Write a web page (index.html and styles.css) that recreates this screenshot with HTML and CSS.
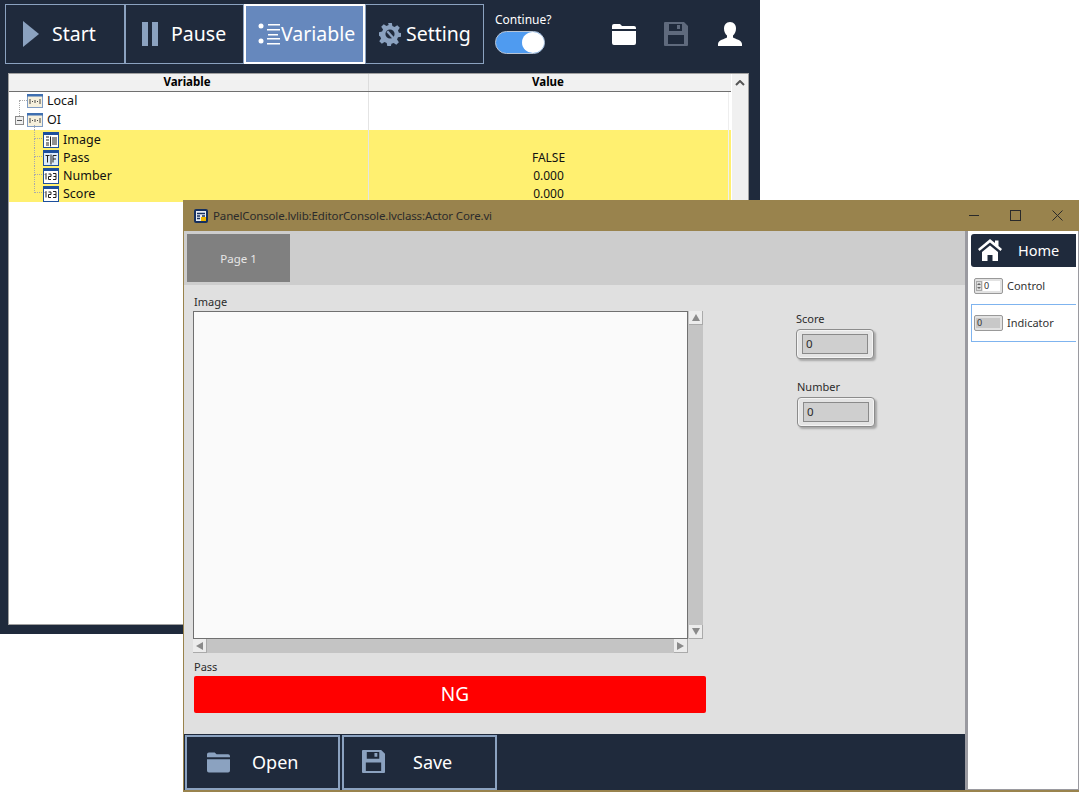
FILE: index.html
```html
<!DOCTYPE html>
<html lang="en">
<head>
    <meta charset="UTF-8">
    <title>PanelConsole</title>
    <link rel="stylesheet" href="styles.css">
</head>
<body>
    <svg class="defs" width="0" height="0">
        <symbol id="ic-cluster" viewBox="0 0 16 14">
            <rect x="0.5" y="0.5" width="15" height="13" fill="#f6f0dc" stroke="#7f9cc4"/>
            <rect x="0" y="0" width="16" height="2.5" fill="#3f6fb0"/>
            <path d="M3 5v5M13 5v5M5 7.5h1M10 7.5h1M8 6v3" stroke="#444" fill="none"/>
        </symbol>
        <symbol id="ic-image" viewBox="0 0 16 16">
            <rect x="0.5" y="0.5" width="15" height="15" fill="#fff" stroke="#1c4f9c"/>
            <rect x="0" y="0" width="16" height="3" fill="#1c4f9c"/>
            <path d="M3 5h3M3 8h3M3 11h3M3 13h3M7.500 4.500v10M9 6h5M9 8h5M9 10h5M9 12h5" stroke="#222" fill="none"/>
        </symbol>
        <symbol id="ic-bool" viewBox="0 0 16 16">
            <rect x="0.500" y="0.500" width="15" height="15" fill="#dcebfa" stroke="#1c4f9c"/>
            <rect x="0" y="0" width="16" height="3" fill="#1c4f9c"/>
            <path d="M2.500 5.500h4M4.500 5.500v7M8 4.500v10M10 5.500v7M10 5.500h3.500M10 9h3" stroke="#222" fill="none"/>
        </symbol>
        <symbol id="ic-num" viewBox="0 0 16 16">
            <rect x="0.500" y="0.500" width="15" height="15" fill="#fff" stroke="#1c4f9c"/>
            <rect x="0" y="0" width="16" height="3" fill="#1c4f9c"/>
            <path d="M2 6.500l1-1v6M5.500 6h2.500v2.500h-2.500v3h2.500M10 5.500h3v6h-3M10.500 8.500h2.500" stroke="#222" fill="none"/>
        </symbol>
        <symbol id="ic-folder" viewBox="0 0 24 22">
            <path d="M0 3a2 2 0 0 1 2-2h6l2 2h12a2 2 0 0 1 2 2v1H0zM0 8h24v12a2 2 0 0 1-2 2H2a2 2 0 0 1-2-2z"/>
        </symbol>
        <symbol id="ic-save" viewBox="0 0 24 24">
            <path fill-rule="evenodd" d="M0 1a1 1 0 0 1 1-1h19l4 4v19a1 1 0 0 1-1 1H1a1 1 0 0 1-1-1zM5 2v7h13V2zM13 3h3v4h-3zM4 13v9h16v-9z"/>
        </symbol>
    </svg>

    <section class="win win-back">
        <header class="toolbar">
            <div class="tabs">
                <button class="tool tool-start">
                    <svg class="tool-ic" width="16" height="26" viewBox="0 0 16 26"><path d="M0 0l16 13L0 26z" fill="#8ba2c0"/></svg>
                    <span>Start</span>
                </button>
                <button class="tool tool-pause">
                    <svg class="tool-ic" width="16" height="24" viewBox="0 0 16 24"><path d="M0 0h6v24H0zM10 0h6v24h-6z" fill="#8ba2c0"/></svg>
                    <span>Pause</span>
                </button>
                <button class="tool tool-var active">
                    <svg class="tool-ic" width="23" height="22" viewBox="0 0 23 22"><g fill="#fff"><circle cx="3" cy="3" r="2.500"/><circle cx="3" cy="18" r="2.500"/><rect x="10" y="1" width="12" height="1.500"/><rect x="9" y="6" width="13" height="1.500"/><rect x="10" y="11" width="10" height="1.500"/><rect x="9" y="15" width="13" height="1.500"/><rect x="9" y="20" width="13" height="1.500"/></g></svg>
                    <span>Variable</span>
                </button>
                <button class="tool tool-set">
                    <svg class="tool-ic" width="22" height="24" viewBox="0 0 24 24"><path fill="#8ba2c0" fill-rule="evenodd" d="M10 0h4l.6 3.400 2.400 1 2.900-2 2.800 2.800-2 2.900 1 2.400 2.300.5v4l-3.300.6-1 2.400 2 2.900-2.800 2.800-2.900-2-2.400 1-.6 2.300h-4l-.6-3.300-2.400-1-2.900 2-2.800-2.800 2-2.900-1-2.400L0 14v-4l3.400-.6 1-2.400-2-2.900 2.800-2.800 2.900 2 2.400-1zM12 7a5 5 0 1 0 0 10 5 5 0 0 0 0-10z"/><path d="M9 9l8 9" stroke="#8ba2c0" stroke-width="2.500"/></svg>
                    <span>Setting</span>
                </button>
            </div>
            <div class="continue">
                <div class="continue-label">Continue?</div>
                <div class="switch"><div class="knob"></div></div>
            </div>
            <div class="toolbar-icons">
                <svg class="ic-white" width="24" height="22"><use href="#ic-folder"/></svg>
                <svg class="ic-dim" width="24" height="24"><use href="#ic-save"/></svg>
                <svg class="ic-white ic-user" width="24" height="24" viewBox="0 0 24 24"><path d="M12 0c4 0 6 3 6 6.500 0 3-1.200 5.500-3 7v2c2 1.500 9 2.500 9 6.500v2H0v-2c0-4 7-5 9-6.500v-2c-1.800-1.500-3-4-3-7C6 3 8 0 12 0z"/></svg>
            </div>
        </header>

        <div class="tree-panel">
            <div class="tree-main">
                <div class="tree-head">
                    <div class="col-var">Variable</div>
                    <div class="col-val">Value</div>
                </div>
                <div class="tree-row row-top">
                    <div class="col-var">
                        <span class="dots"></span>
                        <svg class="tree-ic" width="16" height="14"><use href="#ic-cluster"/></svg>Local
                    </div>
                    <div class="col-val"></div>
                </div>
                <div class="tree-row row-top">
                    <div class="col-var">
                        <span class="expander"></span>
                        <span class="dash-oi"></span>
                        <svg class="tree-ic" width="16" height="14"><use href="#ic-cluster"/></svg>OI
                    </div>
                    <div class="col-val"></div>
                </div>
                <div class="tree-rows">
                    <div class="tree-row child hl">
                        <div class="col-var"><span class="dash"></span><svg class="tree-ic" width="16" height="16"><use href="#ic-image"/></svg>Image</div>
                        <div class="col-val"></div>
                    </div>
                    <div class="tree-row child hl">
                        <div class="col-var"><span class="dash"></span><svg class="tree-ic" width="16" height="16"><use href="#ic-bool"/></svg>Pass</div>
                        <div class="col-val">FALSE</div>
                    </div>
                    <div class="tree-row child hl">
                        <div class="col-var"><span class="dash"></span><svg class="tree-ic" width="16" height="16"><use href="#ic-num"/></svg>Number</div>
                        <div class="col-val">0.000</div>
                    </div>
                    <div class="tree-row child hl">
                        <div class="col-var"><span class="dash"></span><svg class="tree-ic" width="16" height="16"><use href="#ic-num"/></svg>Score</div>
                        <div class="col-val">0.000</div>
                    </div>
                </div>
            </div>
            <div class="tree-scroll">
                <svg width="10" height="6" viewBox="0 0 10 6"><path d="M1 5l4-4 4 4" fill="none" stroke="#555" stroke-width="2"/></svg>
            </div>
        </div>
    </section>

    <section class="win win-front">
        <header class="titlebar">
            <svg class="app-ic" width="14" height="14" viewBox="0 0 14 14"><rect width="14" height="14" rx="2" fill="#16305f"/><path d="M2 2h10v10H2z" fill="#e8eef6"/><path d="M3 4.500h8M3 7h3M8 7h3M3 9.500h3" stroke="#16305f" stroke-width="1.300"/><rect x="7" y="8" width="5" height="4" fill="#f0b800"/></svg>
            <span class="title-text">PanelConsole.lvlib:EditorConsole.lvclass:Actor Core.vi</span>
            <div class="win-btns">
                <span class="win-min"></span>
                <span class="win-max"></span>
                <svg width="11" height="11" viewBox="0 0 11 11"><path d="M.5.500l10 10M10.500.500l-10 10" stroke="#2a2a2a" fill="none"/></svg>
            </div>
        </header>

        <div class="front-body">
            <div class="main-col">
                <div class="page-strip"><div class="page-tab">Page 1</div></div>
                <div class="content">
                    <div class="left-col">
                        <label class="ctl-label">Image</label>
                        <div class="image-wrap">
                            <div class="image-box"></div>
                            <div class="vscroll">
                                <span class="arrow-btn"><i class="tri tri-up"></i></span>
                                <span class="arrow-btn"><i class="tri tri-down"></i></span>
                            </div>
                            <div class="hscroll">
                                <span class="arrow-btn"><i class="tri tri-left"></i></span>
                                <span class="arrow-btn"><i class="tri tri-right"></i></span>
                            </div>
                        </div>
                        <label class="ctl-label pass-label">Pass</label>
                        <div class="ng-bar">NG</div>
                    </div>
                    <div class="right-col">
                        <label class="ctl-label">Score</label>
                        <div class="numeric"><div class="numeric-in">0</div></div>
                        <label class="ctl-label number-label">Number</label>
                        <div class="numeric num-2"><div class="numeric-in">0</div></div>
                    </div>
                </div>
                <footer class="front-foot">
                    <button class="foot-btn">
                        <svg class="foot-ic" width="23" height="22"><use href="#ic-folder"/></svg>
                        <span class="foot-open">Open</span>
                    </button>
                    <button class="foot-btn foot-save-btn">
                        <svg class="foot-ic" width="23" height="23"><use href="#ic-save"/></svg>
                        <span class="foot-save">Save</span>
                    </button>
                </footer>
            </div>
            <aside class="palette">
                <div class="home-btn">
                    <svg width="24" height="22" viewBox="0 0 24 22"><path fill="#fff" d="M12 0l5 4V1.500h3.500V7l3.500 3-1.500 2L12 3.500 1.500 12 0 10zM4 13l8-6.500 8 6.500v9h-5.500v-6h-5v6H4z"/></svg>
                    <span>Home</span>
                </div>
                <div class="pal-item pal-control">
                    <div class="mini mini-ctl">
                        <span class="mini-spin"><i class="spin-up"></i><i class="spin-down"></i></span>
                        <span class="mini-val">0</span>
                    </div>
                    <span class="pal-text">Control</span>
                </div>
                <div class="pal-item pal-ind">
                    <div class="mini mini-ind"><span class="mini-val">0</span></div>
                    <span class="pal-text">Indicator</span>
                </div>
            </aside>
        </div>
    </section>
</body>
</html>
```

FILE: styles.css
```css
html, body {
    margin: 0;
    padding: 0;
    background-color: #fff;
    overflow: hidden;
}
body {
    width: 1079px;
    height: 792px;
    position: relative;
    font-family: "Noto Sans", "Open Sans", sans-serif;
}
.defs {
    position: absolute;
}
.win {
    position: absolute;
    box-sizing: border-box;
}
.win-back {
    left: 0;
    top: 0;
    width: 760px;
    height: 634px;
    background-color: #1f2a3c;
}
.toolbar {
    display: flex;
    height: 73px;
    padding: 4px 0 0 5px;
    box-sizing: border-box;
}
.tabs {
    display: flex;
    height: 60px;
}
.tool {
    display: flex;
    align-items: center;
    height: 60px;
    box-sizing: border-box;
    background-color: #1f2a3c;
    border: 1px solid #8ba2c0;
    margin: 0;
    padding: 0 0 2px 0;
    color: #fff;
    font-family: inherit;
    font-size: 19.5px;
}
.tool-ic {
    margin-top: 2px;
}
.tool-start {
    width: 120px;
    padding-left: 17px;
    gap: 13px;
}
.tool-pause {
    width: 119px;
    padding-left: 16px;
    gap: 13px;
}
.tool-var {
    width: 121px;
    padding-left: 12px;
    gap: 0;
}
.tool-set {
    width: 119px;
    padding-left: 13px;
    gap: 5px;
}
.tool.active {
    background-color: #6688bd;
    border: 2px solid #fff;
}
.continue {
    width: 110px;
    padding: 8px 0 0 11px;
    box-sizing: border-box;
}
.continue-label {
    color: #fff;
    font-size: 12px;
    line-height: 16px;
}
.switch {
    width: 50px;
    height: 23px;
    margin-top: 3px;
    box-sizing: border-box;
    border: 1px solid #b8c4d4;
    border-radius: 12px;
    background-color: #4f9bf0;
    display: flex;
    justify-content: flex-end;
}
.knob {
    width: 22px;
    height: 21px;
    border-radius: 50%;
    background-color: #fff;
}
.toolbar-icons {
    display: flex;
    align-items: center;
    gap: 28px;
    height: 60px;
    margin-left: 18px;
}
.ic-white {
    fill: #fff;
}
.ic-dim {
    fill: #5f6a7d;
}
.ic-user {
    margin-left: 2px;
}
.tree-panel {
    display: flex;
    width: 741px;
    height: 552px;
    margin-left: 8px;
    box-sizing: border-box;
    border: 1px solid #a0a0a0;
    background-color: #fff;
}
.tree-main {
    width: 722px;
}
.tree-scroll {
    flex: 1;
    background-color: #f0f0f0;
    display: flex;
    justify-content: center;
    padding-top: 6px;
    margin-left: 1px;
    height: 100%;
    box-sizing: border-box;
}
.tree-head {
    display: flex;
    height: 18px;
    box-sizing: border-box;
    background-color: #f1f1f1;
    border-bottom: 1px solid #707070;
    font-size: 11.5px;
    font-weight: 700;
    line-height: 16px;
    text-align: center;
    color: #000;
}
.tree-head .col-var {
    width: 360px;
    padding-right: 3px;
    box-sizing: border-box;
    border-right: 1px solid #dcdcdc;
}
.tree-head .col-val {
    flex: 1;
    padding-right: 4px;
}
.tree-row {
    display: flex;
    height: 18px;
    font-size: 12.5px;
    line-height: 18px;
    color: #111;
}
.tree-row .col-var {
    width: 360px;
    border-right: 1px solid #e4e4e4;
    display: flex;
    align-items: center;
    position: relative;
    padding-left: 18px;
    box-sizing: border-box;
}
.tree-row .col-val {
    flex: 1;
    margin-right: 2px;
    border-right: 1px solid #eeeeee;
    text-align: center;
    font-size: 12px;
    padding-top: 1px;
}
.row-top {
    height: 19px;
}
.row-top .col-var {
    padding-bottom: 1px;
}
.tree-ic {
    margin-right: 4px;
    flex: none;
}
.child .col-var {
    padding-left: 34px;
    padding-top: 1px;
}
.hl {
    background-color: #fff070;
}
.dots {
    position: absolute;
    left: 10px;
    top: 8px;
    width: 8px;
    height: 16px;
    border-left: 1px dotted #aaa;
    border-top: 1px dotted #aaa;
    box-sizing: border-box;
}
.expander {
    position: absolute;
    left: 6px;
    top: 5px;
    width: 9px;
    height: 9px;
    box-sizing: border-box;
    border: 1px solid #888;
    background: linear-gradient(#555, #555) center / 5px 1px no-repeat #eee;
}
.dash-oi {
    position: absolute;
    left: 25px;
    top: 14px;
    height: 5px;
    border-left: 1px dotted #aaa;
}
.dash {
    position: absolute;
    left: 25px;
    top: 0;
    width: 8px;
    height: 9px;
    border-left: 1px dotted #aaa;
    border-bottom: 1px dotted #aaa;
    box-sizing: border-box;
}
.child:not(:last-child) .dash::before {
    content: "";
    position: absolute;
    left: -1px;
    top: 9px;
    height: 9px;
    border-left: 1px dotted #aaa;
}
.win-front {
    left: 183px;
    top: 200px;
    width: 896px;
    height: 592px;
    border-left: 1px solid #99834d;
    background-color: #99834d;
}
.titlebar {
    display: flex;
    align-items: center;
    height: 31px;
    padding-left: 10px;
    box-sizing: border-box;
}
.app-ic {
    margin-right: 5px;
}
.title-text {
    font-size: 11.5px;
    letter-spacing: -0.14px;
    color: #2b2b2b;
    flex: 1;
}
.win-btns {
    display: flex;
    align-items: center;
    gap: 31px;
    padding-right: 16px;
}
.win-min {
    width: 10px;
    height: 1px;
    background-color: #2a2a2a;
}
.win-max {
    width: 9px;
    height: 9px;
    border: 1px solid #2a2a2a;
}
.front-body {
    display: flex;
    height: 559px;
}
.main-col {
    width: 781px;
    display: flex;
    flex-direction: column;
    background-color: #e0e0e0;
}
.page-strip {
    height: 54px;
    box-sizing: border-box;
    padding: 3px;
    background-color: #cdcdcd;
}
.page-tab {
    width: 103px;
    height: 48px;
    background-color: #808080;
    color: #e6e6e6;
    font-size: 11.5px;
    line-height: 50px;
    text-align: center;
}
.content {
    flex: 1;
    display: flex;
    padding-left: 9px;
}
.left-col {
    width: 513px;
}
.ctl-label {
    display: block;
    font-size: 11px;
    line-height: 14px;
    color: #2b2b2b;
    padding-left: 1px;
}
.left-col > .ctl-label:first-child {
    margin-top: 10px;
    margin-bottom: 2px;
}
.image-wrap {
    display: grid;
    grid-template-columns: 495px 15px;
    grid-template-rows: 328px 14px;
}
.image-box {
    background-color: #fafafa;
    border: 1px solid #707070;
    box-sizing: border-box;
}
.vscroll {
    background-color: #c4c4c4;
    display: flex;
    flex-direction: column;
    justify-content: space-between;
    align-items: flex-end;
}
.hscroll {
    background-color: #c4c4c4;
    display: flex;
    justify-content: space-between;
}
.arrow-btn {
    width: 14px;
    height: 14px;
    background-color: #ececec;
    border-right: 1px solid #aaa;
    border-bottom: 1px solid #aaa;
    box-sizing: border-box;
    display: flex;
    align-items: center;
    justify-content: center;
}
.tri {
    width: 0;
    height: 0;
    border: 4px solid transparent;
}
.tri-up {
    border-bottom: 7px solid #8a8a8a;
    border-top: 0;
}
.tri-down {
    border-top: 7px solid #8a8a8a;
    border-bottom: 0;
}
.tri-left {
    border-right: 7px solid #8a8a8a;
    border-left: 0;
}
.tri-right {
    border-left: 7px solid #8a8a8a;
    border-right: 0;
}
.pass-label {
    margin-top: 7px;
    margin-bottom: 2px;
}
.ng-bar {
    width: 512px;
    height: 37px;
    margin-left: 1px;
    box-sizing: border-box;
    padding-left: 10px;
    background-color: #ff0000;
    border-radius: 2px;
    color: #fff;
    font-size: 19px;
    line-height: 36px;
    text-align: center;
}
.right-col {
    margin-left: 90px;
    padding-top: 27px;
    width: 80px;
}
.right-col .ctl-label {
    margin-bottom: 3px;
    padding-left: 0;
}
.number-label {
    margin-top: 21px;
    margin-left: 1px;
}
.numeric {
    width: 78px;
    height: 30px;
    box-sizing: border-box;
    padding: 4px 5px;
    background-color: #e4e4e4;
    border: 1px solid #8c8c8c;
    border-radius: 4px;
    box-shadow: 2px 2px 2px rgba(0, 0, 0, 0.25), inset 0 0 0 1px #f4f4f4;
}
.num-2 {
    margin-left: 1px;
}
.numeric-in {
    height: 20px;
    box-sizing: border-box;
    background-color: #cfcfcf;
    border: 1px solid #8a8a8a;
    font-size: 11.5px;
    line-height: 18px;
    padding-left: 3px;
    color: #2b2b2b;
}
.front-foot {
    display: flex;
    height: 56px;
    box-sizing: border-box;
    padding: 1px 0 0 1px;
    gap: 2px;
    background-color: #1f2a3c;
}
.foot-btn {
    display: flex;
    align-items: center;
    width: 155px;
    height: 55px;
    margin: 0;
    padding: 0 0 2px 20px;
    box-sizing: border-box;
    background-color: #1f2a3c;
    border: 2px solid #8ba2c0;
    color: #fff;
    font-family: inherit;
    font-size: 18px;
}
.foot-ic {
    fill: #8ba2c0;
}
.foot-open {
    margin-left: 22px;
}
.foot-save-btn {
    padding-left: 18px;
}
.foot-save {
    margin-left: 28px;
}
.palette {
    flex: 1;
    box-sizing: border-box;
    background-color: #fff;
    border-left: 3px solid #9a9aa0;
    border-right: 1px solid #9a9aa0;
    border-bottom: 1px solid #9a9aa0;
    padding-top: 3px;
}
.home-btn {
    display: flex;
    align-items: center;
    height: 33px;
    margin: 0 2px 0 3px;
    padding: 0 0 1px 7px;
    box-sizing: border-box;
    gap: 16px;
    background-color: #1f2a3c;
    border-radius: 3px 0 0 3px;
    color: #fff;
    font-size: 14.5px;
}
.pal-item {
    display: flex;
    align-items: center;
    gap: 4px;
    font-size: 11px;
    color: #333;
    padding-left: 6px;
}
.pal-text {
    margin-top: -2px;
}
.pal-control .pal-text {
    margin-top: 0;
}
.pal-control {
    height: 37px;
}
.pal-ind {
    height: 38px;
    box-sizing: border-box;
    margin: 0 2px 0 3px;
    padding-left: 2px;
    border: 1px solid #7fb4ef;
    border-right: 0;
}
.mini {
    display: flex;
    align-items: center;
    width: 29px;
    height: 16px;
    box-sizing: border-box;
    border: 1px solid #999;
    border-radius: 2px;
    background-color: #e2e2e2;
    font-size: 9px;
}
.mini-spin {
    display: flex;
    flex-direction: column;
    justify-content: space-around;
    align-items: center;
    width: 6px;
    height: 10px;
    margin-left: 1px;
    background-color: #dedede;
    border: 1px solid #aaa;
    box-sizing: border-box;
}
.spin-up {
    border: 2px solid transparent;
    border-top: 0;
    border-bottom: 2px solid #666;
}
.spin-down {
    border: 2px solid transparent;
    border-bottom: 0;
    border-top: 2px solid #666;
}
.mini-val {
    flex: 1;
    height: 10px;
    margin: 0 2px 0 1px;
    line-height: 10px;
    padding-left: 1px;
}
.mini-ctl .mini-val {
    background-color: #fff;
}
.mini-ind .mini-val {
    background-color: #c8c8c8;
}
```
